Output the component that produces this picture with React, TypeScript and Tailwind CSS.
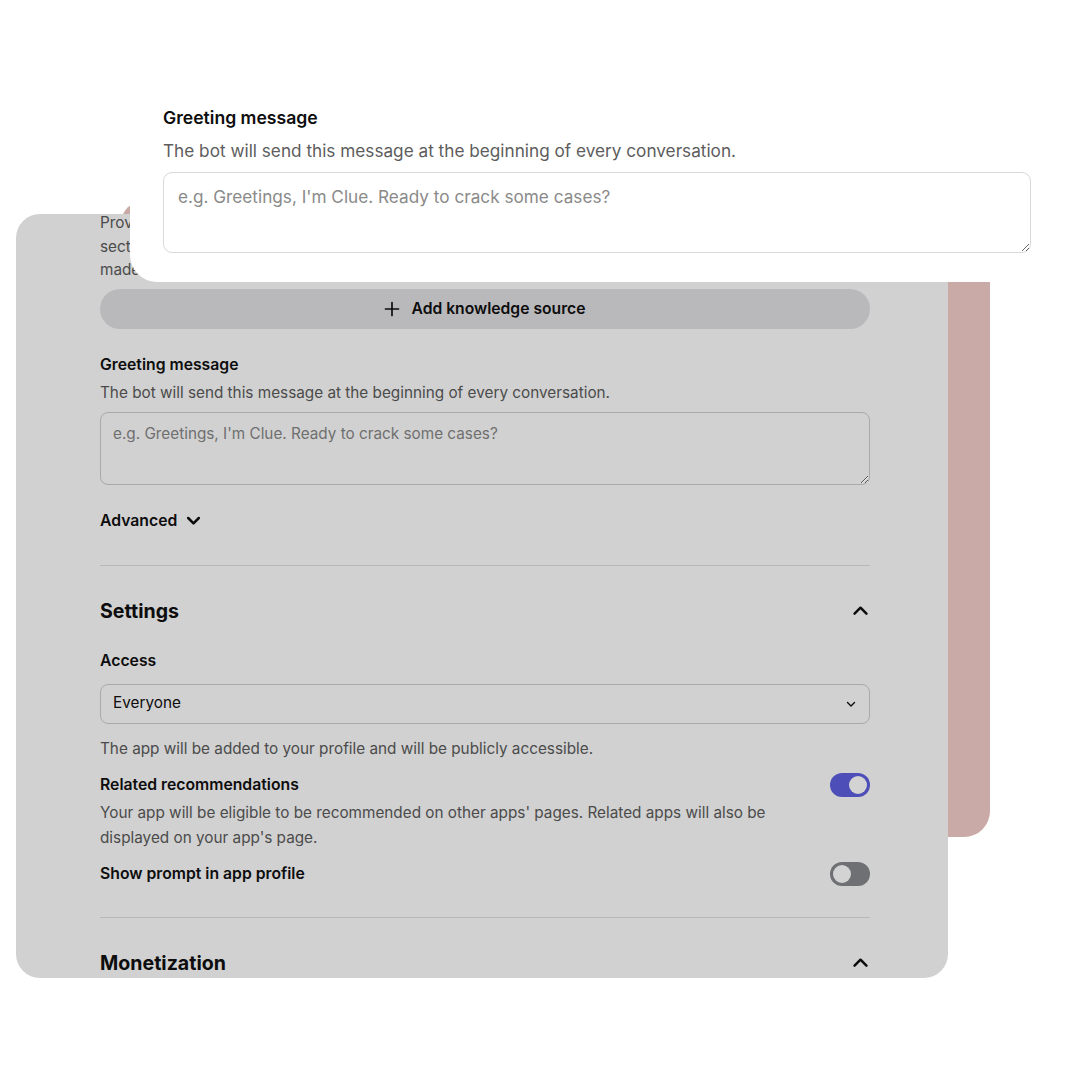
import React from "react";

function ChevronUp({ className = "" }: { className?: string }) {
  return (
    <svg className={className} width="19" height="19" viewBox="0 0 24 24" fill="none" stroke="currentColor" strokeWidth="3.2" strokeLinecap="round" strokeLinejoin="round">
      <path d="M4.5 16l7.5-7.5 7.5 7.5" />
    </svg>
  );
}

function Toggle({ on }: { on: boolean }) {
  return (
    <div className={`flex h-[24px] w-[40px] shrink-0 items-center rounded-full px-[3px] ${on ? "justify-end bg-[#4e4eb9]" : "justify-start bg-[#6f7074]"}`}>
      <div className="h-[18px] w-[18px] rounded-full bg-[#d3d3d3]" />
    </div>
  );
}

export default function App() {
  return (
    <div className="relative h-[1080px] w-[1080px] overflow-hidden bg-white font-['Inter',sans-serif]">
      {/* pink card behind */}
      <div className="absolute left-[120px] top-[200px] h-[637px] w-[870px] rounded-[26px] bg-[#c9aaa6]" />

      {/* gray card */}
      <div className="absolute left-[16px] top-[214px] h-[764px] w-[932px] overflow-hidden rounded-[24px] bg-[#d1d1d1]">
        <div className="ml-[84px] mt-[-3px] flex w-[770px] flex-col">
          <p className="text-[15.3px] leading-[23.5px] text-[#4b4b4b]">
            Provide custom knowledge that your bot will access to inform its responses.
            <br />
            section of the conversation, and the content will be kept private to you.
            <br />
            made after the update is saved and published.
          </p>

          <button className="mt-[7px] flex h-[40px] w-full items-center justify-center gap-[11px] rounded-full bg-[#b9b9bb] text-[15.7px] font-semibold text-[#0d0d0d]">
            <svg width="16" height="16" viewBox="0 0 16 16" fill="none" stroke="currentColor" strokeWidth="1.7" strokeLinecap="round">
              <path d="M8 1.5v13M1.5 8h13" />
            </svg>
            Add knowledge source
          </button>

          <div className="mt-[25px] text-[15.75px] font-semibold leading-[22px] text-[#0d0d0d]">Greeting message</div>
          <div className="mt-[5px] text-[15.3px] leading-[24px] text-[#4b4b4b]">
            The bot will send this message at the beginning of every conversation.
          </div>
          <textarea
            className="mt-[7px] h-[73px] w-full rounded-[8px] border border-[#a9a9a9] bg-transparent px-[12px] py-[10px] text-[15.3px] leading-[22px] text-[#0d0d0d] placeholder:text-[#6f6f6f] outline-none"
            placeholder="e.g. Greetings, I'm Clue. Ready to crack some cases?"
          />

          <div className="mt-[24px] flex items-center gap-[8px] text-[15.75px] font-semibold leading-[24px] text-[#0d0d0d]">
            Advanced
            <svg width="17" height="17" viewBox="0 0 24 24" fill="none" stroke="currentColor" strokeWidth="3.6" strokeLinecap="round" strokeLinejoin="round">
              <path d="M4.5 8.5l7.5 7.5 7.5-7.5" />
            </svg>
          </div>

          <div className="mt-[32px] h-px w-full bg-[#b8b8b8]" />

          <div className="mt-[31px] flex items-center justify-between">
            <div className="text-[19.6px] font-bold leading-[28px] text-[#0d0d0d]">Settings</div>
            <ChevronUp className="text-[#0d0d0d]" />
          </div>

          <div className="mt-[25px] text-[15.75px] font-semibold leading-[22px] text-[#0d0d0d]">Access</div>
          <div className="mt-[12px] flex h-[40px] w-full items-center justify-between rounded-[8px] border border-[#a9a9a9] pl-[12px] pr-[12px]">
            <span className="text-[15.3px] text-[#0d0d0d]">Everyone</span>
            <svg width="12" height="12" viewBox="0 0 12 12" fill="none" stroke="currentColor" strokeWidth="1.4" strokeLinecap="round" strokeLinejoin="round" className="text-[#0d0d0d]">
              <path d="M2.5 4.5L6 8l3.5-3.5" />
            </svg>
          </div>
          <div className="mt-[13px] text-[15.3px] leading-[24px] text-[#4b4b4b]">
            The app will be added to your profile and will be publicly accessible.
          </div>

          <div className="mt-[12px] flex items-center justify-between">
            <div className="text-[15.75px] font-semibold leading-[22px] text-[#0d0d0d]">Related recommendations</div>
            <Toggle on />
          </div>
          <div className="mt-[3px] w-[690px] text-[15.3px] leading-[25px] text-[#4b4b4b]">
            Your app will be eligible to be recommended on other apps' pages. Related apps will also be displayed on your app's page.
          </div>

          <div className="mt-[12px] flex items-center justify-between">
            <div className="text-[15.75px] font-semibold leading-[22px] text-[#0d0d0d]">Show prompt in app profile</div>
            <Toggle on={false} />
          </div>

          <div className="mt-[31px] h-px w-full bg-[#b8b8b8]" />

          <div className="mt-[31px] flex items-center justify-between">
            <div className="text-[19.6px] font-bold leading-[28px] text-[#0d0d0d]">Monetization</div>
            <ChevronUp className="text-[#0d0d0d]" />
          </div>
        </div>
      </div>

      {/* white zoomed card */}
      <div className="absolute left-[130px] top-[60px] flex h-[222px] w-[934px] flex-col justify-end rounded-[27px] bg-white px-[33px] pb-[29px]">
        <div className="text-[17.6px] font-semibold leading-[25px] text-[#0d0d0d]">Greeting message</div>
        <div className="mt-[7px] text-[17.2px] leading-[27px] text-[#5d5d5d]">
          The bot will send this message at the beginning of every conversation.
        </div>
        <textarea
          className="mt-[8px] h-[81px] w-full rounded-[9px] border border-[#d9d9d9] bg-white px-[14px] py-[11px] text-[17.2px] leading-[25px] text-[#0d0d0d] placeholder:text-[#8a8a8a] outline-none"
          placeholder="e.g. Greetings, I'm Clue. Ready to crack some cases?"
        />
      </div>
    </div>
  );
}
